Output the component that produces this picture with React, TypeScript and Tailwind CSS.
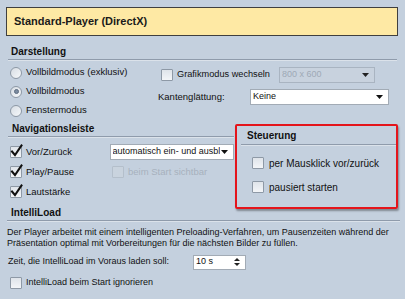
import { ReactNode } from 'react';

const font = { fontFamily: '"Liberation Sans", Arial, sans-serif' };

const CheckBox = ({ checked = false, disabled = false }: { checked?: boolean; disabled?: boolean }) => {
  return <span className="relative inline-block w-[12px] h-[12px] shrink-0">
    <span className={disabled
      ? 'absolute inset-0 border border-[#b4bfcb] bg-[#c9d3de] rounded-[1px]'
      : 'absolute inset-0 border border-[#8e99a6] bg-gradient-to-b from-[#dfe4ea] to-[#f3f5f8] rounded-[1px]'} />
    {checked && <svg className="absolute left-[0px] top-[-2px]" width="13" height="14" viewBox="0 0 13 14">
      <path d="M2 7.5 L5 11 L11.5 1.5" fill="none" stroke="#111" strokeWidth="2" strokeLinecap="square" />
    </svg>}
  </span>;
};

const Radio = ({ checked = false }: { checked?: boolean }) => {
  return <span className="relative flex items-center justify-center w-[12px] h-[12px] rounded-full border border-[#8d98a5] bg-gradient-to-br from-[#d7dde4] to-[#f6f8fa] shrink-0">
    {checked && <span className="w-[5px] h-[5px] rounded-full bg-[#7b8ba0] border border-[#5d6c80]" />}
  </span>;
};

const Arrow = ({ color = '#111' }: { color?: string }) => {
  return <svg width="7" height="4" viewBox="0 0 7 4"><path d="M0 0 H7 L3.5 4 Z" fill={color} /></svg>;
};

const Select = ({ value, className, disabled = false }: { value: string; className: string; disabled?: boolean }) => {
  return <div className={`${className} h-[16px] flex items-center justify-between pl-[2px] pr-[5px] border ${disabled ? 'border-[#a9b4c1] bg-[#c8d2de] text-[#9ea9b6]' : 'border-[#a2abb5] bg-white text-[#111]'}`}>
    <span className="whitespace-nowrap overflow-hidden">{value}</span>
    <Arrow color={disabled ? '#222' : '#111'} />
  </div>;
};

const Heading = ({ children, className = '' }: { children: ReactNode; className?: string }) => {
  return <div className={`h-[16px] flex items-center border-b border-[#8f9bab] shadow-[0_1px_0_#dbe2ea] font-bold text-[10px] text-[#111] ${className}`}>
    {children}
  </div>;
};

const Row = ({ children, className = '' }: { children: ReactNode; className?: string }) => {
  return <div className={`flex items-center gap-[4px] ${className}`}>{children}</div>;
};

export default function App() {
  return (
    <div className="w-[405px] h-[299px] overflow-hidden bg-[#c4d0de] text-[9px] text-[#111]" style={font}>
      <div className="ml-[6px] mr-[7px] mt-[7px] h-[29px] flex items-center pl-[7px] border border-[#3f3f3f] bg-[#fee9a4] text-[11px] font-bold text-[#1a1a1a]">
        Standard-Player (DirectX)
      </div>

      <div className="mx-[8px] mt-[8px]">
        <Heading className="pl-[3px]">Darstellung</Heading>
        <div className="flex text-[9.5px]">
          <div className="w-[150px] pt-[3px] pl-[2px]">
            <Row className="h-[19px]"><Radio /><span>Vollbildmodus (exklusiv)</span></Row>
            <Row className="h-[19px]"><Radio checked /><span>Vollbildmodus</span></Row>
            <Row className="h-[19px]"><Radio /><span>Fenstermodus</span></Row>
          </div>
          <div className="pt-[7px]">
            <Row className="h-[16px] pl-[3px]">
              <CheckBox />
              <span className="w-[98px] whitespace-nowrap text-[9.2px]">Grafikmodus wechseln</span>
              <Select value="800 x 600" className="w-[96px] text-[9px]" disabled />
            </Row>
            <Row className="h-[16px] mt-[6px]">
              <span className="w-[88px]">Kantenglättung:</span>
              <Select value="Keine" className="w-[139px] text-[9px]" />
            </Row>
          </div>
        </div>
      </div>

      <div className="flex pl-[8px] h-[83px] mt-[1px]">
        <div className="w-[226px]">
          <Heading className="pl-[4px]">Navigationsleiste</Heading>
          <div className="pt-[5px] pl-[2px] text-[9.5px]">
            <Row className="h-[20px]">
              <CheckBox checked />
              <span className="w-[80px]">Vor/Zurück</span>
              <Select value="automatisch ein- und ausbl" className="w-[125px] text-[9px]" />
            </Row>
            <Row className="h-[20px]">
              <CheckBox checked />
              <span className="w-[82px]">Play/Pause</span>
              <CheckBox disabled />
              <span className="text-[#a7b1bd]">beim Start sichtbar</span>
            </Row>
            <Row className="h-[20px]">
              <CheckBox checked />
              <span>Lautstärke</span>
            </Row>
          </div>
        </div>
        <div className="w-[163px] h-[85px] mt-[3px] ml-[1px] border-2 border-[#e4141b] rounded-[2px] shadow-[1px_2px_2px_rgba(0,0,0,0.35)] pl-[4px] shrink-0">
          <Heading className="h-[19px] pl-[6px]">Steuerung</Heading>
          <div className="pt-[8px] pl-[11px] flex flex-col gap-[4px]">
            <Row className="h-[20px] gap-[5px]"><CheckBox /><span className="text-[10px]">per Mausklick vor/zurück</span></Row>
            <Row className="h-[20px] gap-[5px]"><CheckBox /><span className="text-[10px]">pausiert starten</span></Row>
          </div>
        </div>
      </div>

      <div className="ml-[7px] mr-[5px] mt-[1px]">
        <Heading className="pl-[4px]">IntelliLoad</Heading>
        <p className="mt-[6px] leading-[11px]">
          Der Player arbeitet mit einem intelligenten Preloading-Verfahren, um Pausenzeiten während der Präsentation optimal mit Vorbereitungen für die nächsten Bilder zu füllen.
        </p>
        <Row className="h-[16px] mt-[5px] pl-[1px]">
          <span className="w-[181px]">Zeit, die IntelliLoad im Voraus laden soll:</span>
          <div className="w-[53px] h-[15px] flex items-center justify-between border border-[#a2abb5] bg-white pl-[2px] pr-[5px] text-[#111]">
            <span>10 s</span>
            <span className="flex flex-col gap-[2px]">
              <svg width="6" height="3" viewBox="0 0 6 3"><path d="M0 3 H6 L3 0 Z" fill="#222" /></svg>
              <svg width="6" height="3" viewBox="0 0 6 3"><path d="M0 0 H6 L3 3 Z" fill="#222" /></svg>
            </span>
          </div>
        </Row>
        <Row className="h-[16px] mt-[5px] pl-[3px]">
          <CheckBox />
          <span>IntelliLoad beim Start ignorieren</span>
        </Row>
      </div>
    </div>
  );
}
